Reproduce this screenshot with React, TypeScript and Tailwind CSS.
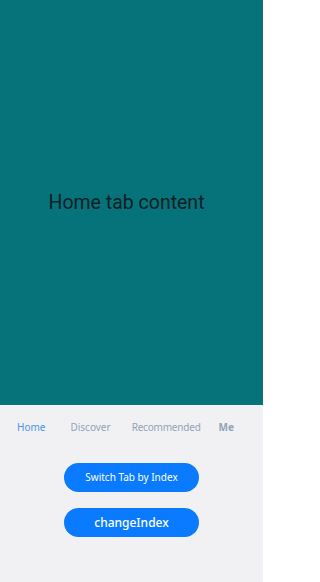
export default function App() {
  return (
    <div className="w-[263px] h-[582px] flex flex-col bg-[#f1f1f3] font-['Noto_Sans',sans-serif]">
      <div className="h-[405px] bg-[#06737b] flex items-center justify-center">
        <span className="text-[19.5px] font-['Roboto',sans-serif] text-[#102024] pr-[10px]">Home tab content</span>
      </div>
      <div className="h-[44px] flex items-center pl-[17px] text-[10px]">
        <span className="text-[#4a93e6]">Home</span>
        <span className="ml-[25px] text-[#91a3b8]">Discover</span>
        <span className="ml-[21px] text-[#91a3b8] tracking-[-0.2px]">Recommended</span>
        <span className="ml-[18px] text-[#91a3b8] font-bold">Me</span>
      </div>
      <div className="flex flex-col items-center gap-[16px] pt-[14px]">
        <button className="w-[135px] h-[29px] rounded-full bg-[#0a7bff] text-white text-[10px]">
          Switch Tab by Index
        </button>
        <button className="w-[135px] h-[29px] rounded-full bg-[#0a7bff] text-white text-[12px] font-medium">
          changeIndex
        </button>
      </div>
    </div>
  );
}
